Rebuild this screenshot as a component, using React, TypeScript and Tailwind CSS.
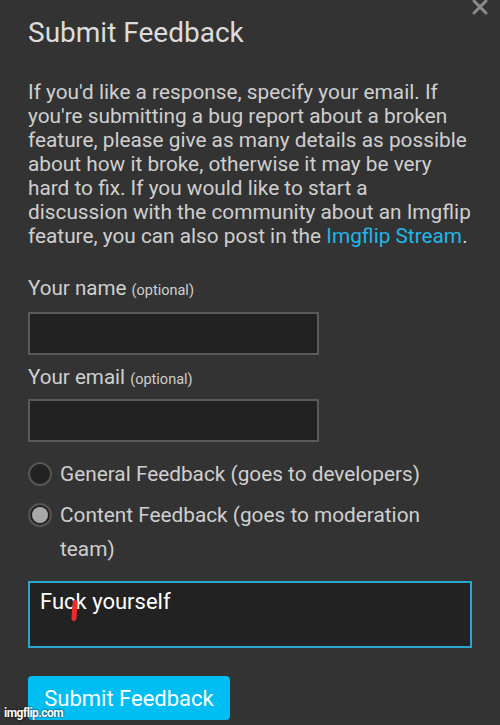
import { X } from "lucide-react";

const App = () => {
  return (
    <div className="relative w-[500px] h-[725px] overflow-hidden bg-[#333333] font-['Roboto',sans-serif]">
      <X className="absolute right-[8px] top-[-5px] text-[#8a8a8a]" size={24} strokeWidth={3} />

      <div className="px-[28px] pt-[16px]">
        <h1 className="text-[28px] leading-[34px] text-[#dcdcdc]">Submit Feedback</h1>

        <p className="mt-[30px] w-[443px] text-[20.8px] leading-[24px] text-[#cfcfcf]">
          If you'd like a response, specify your email. If you're submitting a bug report about a broken
          feature, please give as many details as possible about how it broke, otherwise it may be very hard
          to fix. If you would like to start a discussion with the community about an Imgflip feature, you can
          also post in the <span className="text-[#1fb6e8]">Imgflip Stream</span>.
        </p>

        <label className="mt-[26px] block text-[20.6px] leading-[28px] text-[#cfcfcf]">
          Your name <span className="text-[14.5px]">(optional)</span>
        </label>
        <input className="mt-[7px] block w-[291px] h-[43px] bg-[#222222] border-2 border-[#5a5a5a]" />

        <label className="mt-[8px] block text-[20.6px] leading-[28px] text-[#cfcfcf]">
          Your email <span className="text-[14.5px]">(optional)</span>
        </label>
        <input className="mt-[5px] block w-[291px] h-[43px] bg-[#222222] border-2 border-[#5a5a5a]" />

        <div className="mt-[15px] flex flex-col gap-[7px]">
          <div className="flex items-start gap-[8px]">
            <span className="mt-[5px] w-[24px] h-[24px] shrink-0 rounded-full bg-[#222222] border-2 border-[#555555]" />
            <span className="text-[20.8px] leading-[34px] text-[#cfcfcf]">General Feedback (goes to developers)</span>
          </div>
          <div className="flex items-start gap-[8px]">
            <span className="mt-[5px] w-[24px] h-[24px] shrink-0 rounded-full bg-[#222222] border-2 border-[#555555] flex items-center justify-center">
              <span className="w-[16px] h-[16px] rounded-full bg-[#a8a8a8]" />
            </span>
            <span className="w-[380px] text-[20.8px] leading-[34px] text-[#cfcfcf]">
              Content Feedback (goes to moderation team)
            </span>
          </div>
        </div>

        <div className="relative mt-[15px] w-[444px] h-[67px] bg-[#222222] border-2 border-[#2aa6cf] px-[10px] pt-[5px]">
          <span className="text-[22px] leading-[28px] text-white">Fuck yourself</span>
          <span className="absolute left-[42px] top-[17px] w-[5px] h-[21px] rotate-[4deg] rounded-full bg-[#ee2a2a]" />
        </div>

        <button className="mt-[28px] w-[202px] h-[44px] rounded-[4px] bg-[#00bef2] text-[22px] text-white">
          Submit Feedback
        </button>
      </div>

      <span className="absolute left-[4px] bottom-[3px] text-[12px] font-bold tracking-[-0.5px] text-white [text-shadow:0_0_2px_#000]">
        imgflip.com
      </span>
    </div>
  );
};

export default App;
